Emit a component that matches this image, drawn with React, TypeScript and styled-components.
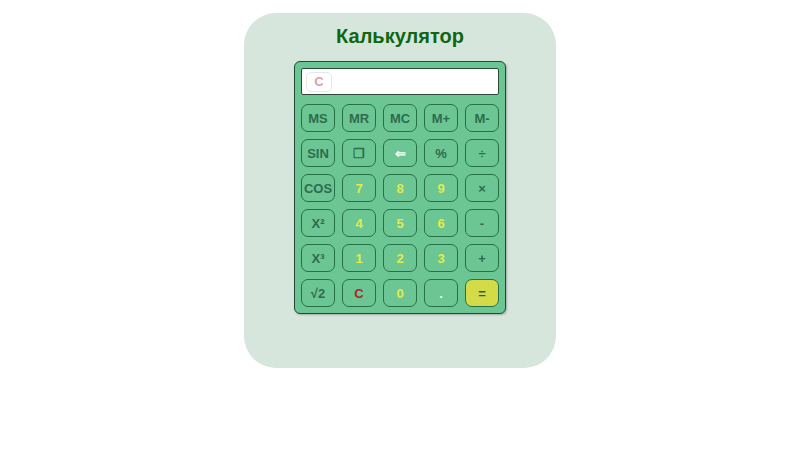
import React from 'react';
import styled, { createGlobalStyle } from 'styled-components';

const GlobalStyle = createGlobalStyle`
  body {
    margin: 0;
    background: #ffffff;
    font-family: "Liberation Sans", Arial, sans-serif;
  }
`;

const Page = styled.div`
  display: flex;
  justify-content: center;
  padding-top: 13px;
`;

const Card = styled.div`
  width: 312px;
  height: 355px;
  box-sizing: border-box;
  background: #d6e6dd;
  border-radius: 32px;
  padding-top: 11px;
  display: flex;
  flex-direction: column;
  align-items: center;
`;

const Title = styled.h1`
  margin: 0;
  font-size: 20px;
  line-height: 24px;
  font-weight: bold;
  color: #116611;
`;

const Calculator = styled.div`
  margin-top: 13px;
  width: 212px;
  box-sizing: border-box;
  background: #6bc693;
  border: 1px solid #244a33;
  border-radius: 6px;
  padding: 6px;
  box-shadow: 1px 1px 2px rgba(0, 0, 0, 0.25);
`;

const Display = styled.div`
  height: 27px;
  box-sizing: border-box;
  background: #ffffff;
  border: 1px solid #2b4a38;
  border-radius: 2px;
  display: flex;
  align-items: center;
  padding-left: 4px;
`;

const ClearChip = styled.div`
  width: 26px;
  height: 20px;
  box-sizing: border-box;
  border: 1px solid #e4e8e6;
  border-radius: 5px;
  display: flex;
  align-items: center;
  justify-content: center;
  color: #e0a0aa;
  font-size: 13px;
  font-weight: bold;
`;

const Keys = styled.div`
  margin-top: 9px;
  display: grid;
  grid-template-columns: repeat(5, 34px);
  grid-auto-rows: 28px;
  column-gap: 7px;
  row-gap: 7px;
`;

type Kind = 'fn' | 'digit' | 'light' | 'clear' | 'equals';

const colors: Record<Kind, string> = {
  fn: '#2f6c4e',
  digit: '#e4ea4c',
  light: '#f2fff6',
  clear: '#a8282a',
  equals: '#2f5c3c',
};

const Key = styled.button<{ $kind: Kind }>`
  box-sizing: border-box;
  width: 34px;
  height: 28px;
  padding: 0;
  border: 1.5px solid #267046;
  border-radius: 7px;
  background: ${(p) => (p.$kind === 'equals' ? '#d3dc48' : '#6bc693')};
  color: ${(p) => colors[p.$kind]};
  font-family: "Liberation Sans", Arial, sans-serif;
  font-size: 13px;
  font-weight: bold;
  display: flex;
  align-items: center;
  justify-content: center;
`;

const keys: [string, Kind][] = [
  ['MS', 'fn'], ['MR', 'fn'], ['MC', 'fn'], ['M+', 'fn'], ['M-', 'fn'],
  ['SIN', 'fn'], ['❐', 'fn'], ['⇐', 'light'], ['%', 'fn'], ['÷', 'fn'],
  ['COS', 'fn'], ['7', 'digit'], ['8', 'digit'], ['9', 'digit'], ['×', 'fn'],
  ['X²', 'fn'], ['4', 'digit'], ['5', 'digit'], ['6', 'digit'], ['-', 'fn'],
  ['X³', 'fn'], ['1', 'digit'], ['2', 'digit'], ['3', 'digit'], ['+', 'fn'],
  ['√2', 'fn'], ['C', 'clear'], ['0', 'digit'], ['.', 'light'], ['=', 'equals'],
];

export default function App() {
  return (
    <>
      <GlobalStyle />
      <Page>
        <Card>
          <Title>Калькулятор</Title>
          <Calculator>
            <Display>
              <ClearChip>C</ClearChip>
            </Display>
            <Keys>
              {keys.map(([label, kind], i) => (
                <Key key={i} $kind={kind}>
                  {label}
                </Key>
              ))}
            </Keys>
          </Calculator>
        </Card>
      </Page>
    </>
  );
}
